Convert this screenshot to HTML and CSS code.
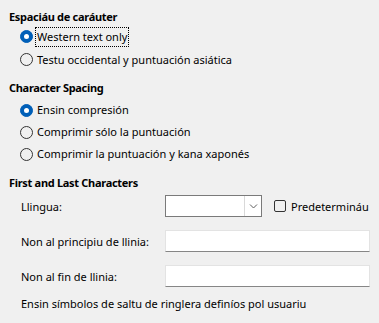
FILE: index.html
```html
<!DOCTYPE html>
<html lang="ast">
<head>
  <meta charset="UTF-8"/>
  <title>Asian Typography</title>
  <link rel="stylesheet" href="styles.css">
</head>
<body>
  <div class="page">
    <h2 class="heading">Espaciáu de caráuter</h2>
    <div class="options">
      <label class="option"><span class="radio checked"></span><span class="focus">Western text only</span></label>
      <label class="option"><span class="radio"></span><span class="text">Testu occidental y puntuación asiática</span></label>
    </div>

    <h2 class="heading second">Character Spacing</h2>
    <div class="options compact">
      <label class="option"><span class="radio checked"></span><span class="text">Ensin compresión</span></label>
      <label class="option"><span class="radio"></span><span class="text">Comprimir sólo la puntuación</span></label>
      <label class="option"><span class="radio"></span><span class="text">Comprimir la puntuación y kana xaponés</span></label>
    </div>

    <h2 class="heading third">First and Last Characters</h2>
    <div class="form">
      <div class="row first">
        <span class="label">Llingua:</span>
        <div class="combo">
          <span class="combo-value"></span>
          <span class="combo-btn">
            <svg width="9" height="6" viewBox="0 0 9 6"><path d="M1 1.5 L4.5 5 L8 1.5" fill="none" stroke="#606060" stroke-width="1"/></svg>
          </span>
        </div>
        <label class="check"><span class="box"></span>Predetermináu</label>
      </div>
      <div class="row">
        <span class="label">Non al principiu de llinia:</span>
        <div class="field"></div>
      </div>
      <div class="row">
        <span class="label">Non al fin de llinia:</span>
        <div class="field"></div>
      </div>
      <p class="note">Ensin símbolos de saltu de ringlera definíos pol usuariu</p>
    </div>
  </div>
</body>
</html>
```

FILE: styles.css
```css
* {
  box-sizing: border-box;
  margin: 0;
  padding: 0;
}

body {
  background: #f0f0f0;
  font-family: 'Noto Sans', 'Open Sans', sans-serif;
  font-size: 11px;
  color: #000;
  width: 379px;
  height: 323px;
  overflow: hidden;
}

.page {
  padding-top: 9px;
}

.heading {
  font-size: 11px;
  font-weight: bold;
  letter-spacing: -0.3px;
  line-height: 16px;
  padding-left: 9px;
}

.heading.second {
  margin-top: 9px;
}

.heading.third {
  margin-top: 10px;
}

.options {
  display: flex;
  flex-direction: column;
  padding-left: 20px;
  margin-top: 0;
}

.options.compact {
  margin-top: 3px;
}

.option {
  display: flex;
  align-items: center;
  height: 23px;
}

.options.compact .option {
  height: 22px;
}

.radio {
  width: 13px;
  height: 13px;
  border-radius: 50%;
  border: 1px solid #333;
  flex: none;
  margin-right: 2px;
  display: flex;
  align-items: center;
  justify-content: center;
}

.radio.checked {
  background: #005fb8;
  border-color: #005fb8;
}

.radio.checked::after {
  content: '';
  width: 5px;
  height: 5px;
  border-radius: 50%;
  background: #fff;
}

.text {
  padding-left: 2px;
  line-height: 16px;
}

.focus {
  border: 1px dotted #000;
  padding: 1px 1px;
  line-height: 16px;
}

.form {
  padding-left: 21px;
}

.row {
  display: flex;
  align-items: center;
  margin-top: 13px;
}

.row.first {
  margin-top: 4px;
}

.row.first + .row {
  margin-top: 13px;
}

.label {
  width: 144px;
  flex: none;
}

.combo {
  display: flex;
  width: 97px;
  height: 22px;
  border: 1px solid #7a7a7a;
  background: #fff;
}

.combo-value {
  flex: 1;
}

.combo-btn {
  width: 17px;
  border-left: 1px solid #d9d9d9;
  display: flex;
  align-items: center;
  justify-content: center;
}

.check {
  display: flex;
  align-items: center;
  margin-left: 12px;
}

.box {
  width: 12px;
  height: 12px;
  border: 1px solid #333;
  border-radius: 2px;
  margin-right: 5px;
}

.field {
  width: 205px;
  height: 22px;
  background: #fff;
  border: 1px solid #e3e3e3;
  border-bottom-color: #868686;
}

.note {
  margin-top: 9px;
  line-height: 16px;
}
```
